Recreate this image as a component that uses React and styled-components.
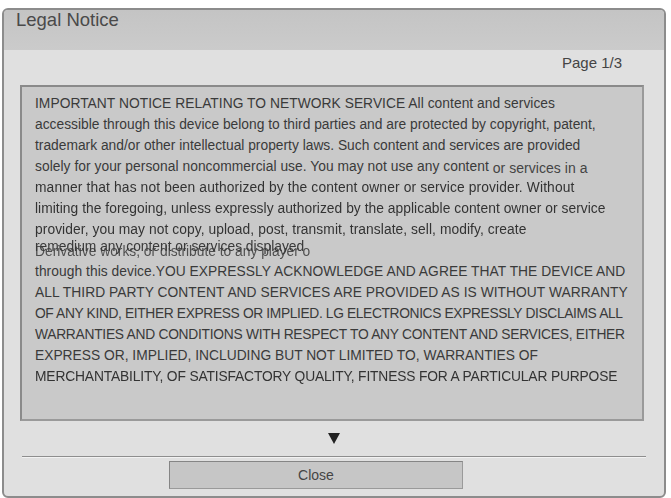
import React from "react";
import styled, { createGlobalStyle } from "styled-components";

const Global = createGlobalStyle`
  html, body { margin: 0; padding: 0; background: #ffffff; }
  body { font-family: "Liberation Sans", Arial, sans-serif; }
`;

const Frame = styled.div`
  box-sizing: border-box;
  margin: 8px 0 0 2px;
  width: 664px;
  height: 490px;
  border: 2px solid #8c8c8c;
  border-radius: 6px;
  overflow: hidden;
  background: #e0e0e0;
  display: flex;
  flex-direction: column;
`;

const Header = styled.div`
  height: 40px;
  flex: none;
  background: linear-gradient(#c4c4c4, #cbcbcb);
  padding: 0 12px;
  font-size: 18.5px;
  line-height: 20px;
  color: #4a4a4a;
`;

const Body = styled.div`
  flex: 1;
  display: flex;
  flex-direction: column;
  padding: 0 20px 0 16px;
`;

const PageRow = styled.div`
  height: 35px;
  display: flex;
  justify-content: flex-end;
  padding: 4px 22px 0 0;
  box-sizing: border-box;
  font-size: 15px;
  line-height: 17px;
  color: #444;
`;

const ContentBox = styled.div`
  box-sizing: border-box;
  height: 336px;
  background: #c9c9c9;
  border: 2px solid #8a8a8a;
  border-right-color: #9a9a9a;
  border-bottom-color: #9a9a9a;
  padding: 6px 0 0 13px;
  font-size: 13.8px;
  line-height: 21px;
  color: #3a3a3a;
`;

const Line = styled.div`
  white-space: nowrap;
  position: relative;
  height: 21px;
  letter-spacing: ${(p) => p.$ls || 0}px;
  filter: ${(p) => (p.$blur ? "blur(0.4px)" : "none")};
  color: ${(p) => (p.$blur ? "#333" : "#3a3a3a")};
`;

const Shifted = styled.span`
  vertical-align: -2px;
  font-size: 14px;
  color: #444;
`;

const Upper = styled.span`
  display: inline-block;
  transform: translateY(-4px);
  filter: blur(0.4px);
`;

const Overlay = styled.span`
  position: absolute;
  left: 0;
  top: 1px;
  filter: blur(0.4px);
  opacity: 0.85;
`;

const ArrowRow = styled.div`
  height: 35px;
  display: flex;
  align-items: center;
  justify-content: center;
  padding-left: 4px;
`;

const Arrow = styled.div`
  width: 0;
  height: 0;
  border-left: 6px solid transparent;
  border-right: 6px solid transparent;
  border-top: 11px solid #222;
`;

const Separator = styled.div`
  margin: 0 -2px 0 2px;
  height: 0;
  border-top: 1px solid #8e8e8e;
  border-bottom: 1px solid #f2f2f2;
`;

const ButtonRow = styled.div`
  display: flex;
  padding: 3px 0 0 149px;
`;

const CloseButton = styled.button`
  box-sizing: border-box;
  width: 294px;
  height: 28px;
  background: #c6c6c6;
  border: 1px solid #858585;
  border-right-color: #9a9a9a;
  border-bottom-color: #9a9a9a;
  font-family: "Liberation Sans", Arial, sans-serif;
  font-size: 14px;
  color: #454545;
  padding: 0;
  cursor: pointer;
`;

const lines = [
  { t: "IMPORTANT NOTICE RELATING TO NETWORK SERVICE All content and services", ls: 0.04 },
  { t: "accessible through this device belong to third parties and are protected by copyright, patent," },
  { t: "trademark and/or other intellectual property laws. Such content and services are provided" },
  { t: "solely for your personal noncommercial use. You may not use any content", extra: " or services in a", ls: 0.04 },
  { t: "manner that has not been authorized by the content owner or service provider. Without", blur: true, ls: 0.13 },
  { t: "limiting the foregoing, unless expressly authorized by the applicable content owner or service", blur: true, ls: 0.04 },
  { t: "provider, you may not copy, upload, post, transmit, translate, sell, modify, create", blur: true, ls: 0.07 },
  { overlap: true },
  { t: "through this device.YOU EXPRESSLY ACKNOWLEDGE AND AGREE THAT THE DEVICE AND", ls: 0.05 },
  { t: "ALL THIRD PARTY CONTENT AND SERVICES ARE PROVIDED AS IS WITHOUT WARRANTY", ls: 0.04 },
  { t: "OF ANY KIND, EITHER EXPRESS OR IMPLIED. LG ELECTRONICS EXPRESSLY DISCLAIMS ALL", ls: -0.37 },
  { t: "WARRANTIES AND CONDITIONS WITH RESPECT TO ANY CONTENT AND SERVICES, EITHER", ls: -0.27 },
  { t: "EXPRESS OR, IMPLIED, INCLUDING BUT NOT LIMITED TO, WARRANTIES OF" },
  { t: "MERCHANTABILITY, OF SATISFACTORY QUALITY, FITNESS FOR A PARTICULAR PURPOSE", blur: true, ls: -0.15 },
];

export default function App() {
  return (
    <>
      <Global />
      <Frame>
        <Header>Legal Notice</Header>
        <Body>
          <PageRow>Page 1/3</PageRow>
          <ContentBox>
            {lines.map((l, i) =>
              l.overlap ? (
                <Line key={i}>
                  <Upper>remedium any content or services displayed</Upper>
                  <Overlay>Derivative works, or distribute to any player o</Overlay>
                </Line>
              ) : (
                <Line key={i} $blur={l.blur} $ls={l.ls}>
                  {l.t}
                  {l.extra && <Shifted>{l.extra}</Shifted>}
                </Line>
              )
            )}
          </ContentBox>
          <ArrowRow>
            <Arrow />
          </ArrowRow>
          <Separator />
          <ButtonRow>
            <CloseButton>Close</CloseButton>
          </ButtonRow>
        </Body>
      </Frame>
    </>
  );
}
